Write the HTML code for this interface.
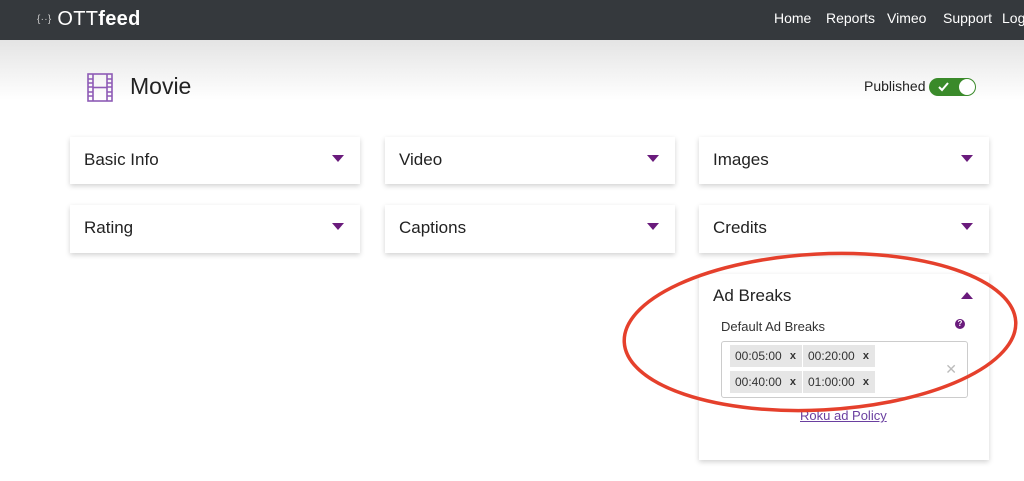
<!DOCTYPE html><html><head><style>
body{margin:0;width:1024px;height:481px;overflow:hidden;background:#fff;font-family:"Liberation Sans",sans-serif;position:relative}
.hdr{position:absolute;left:0;top:0;width:1024px;height:40px;background:#35393d;color:#fff}
.shade{position:absolute;top:40px;left:0;width:1024px;height:60px;background:linear-gradient(#e4e4e4,#fff)}
.logo{position:absolute;left:37px;top:8px;font-size:20px;letter-spacing:0.3px}
.nav{position:absolute;top:10px;font-size:14px}
.card{position:absolute;background:#fff;box-shadow:0 2px 5px rgba(0,0,0,.18);width:290px}
.card .t{position:absolute;left:14px;top:13px;font-size:17px;color:#222}
.tri{position:absolute;right:16px;top:18px;width:0;height:0;border-left:6px solid transparent;border-right:6px solid transparent;border-top:7px solid #6a1b7c}
.tag{position:absolute;background:#e6e6e6;height:22px;font-size:12px;color:#333;line-height:22px;padding-left:5px;width:67px}
.tag b{position:absolute;right:6px;font-size:11px}
</style></head><body>
<div class="hdr">
<div class="logo"><span style="font-size:10px;color:#ccc;vertical-align:3px">{··}</span> OTT<b>feed</b></div>
<div class="nav" style="left:774px">Home</div><div class="nav" style="left:826px">Reports</div><div class="nav" style="left:887px">Vimeo</div><div class="nav" style="left:943px">Support</div><div class="nav" style="left:1002px">Log</div>
</div>
<div class="shade"></div>
<svg style="position:absolute;left:87px;top:73px" width="26" height="29" viewBox="0 0 26 29"><g fill="none" stroke="#8e5bb6" stroke-width="1.6"><rect x="1" y="1" width="24" height="27"/><line x1="6" y1="1" x2="6" y2="28"/><line x1="20" y1="1" x2="20" y2="28"/><line x1="6" y1="14.5" x2="20" y2="14.5"/><path d="M1 6h5M1 10h5M1 14h5M1 19h5M1 23h5M20 6h5M20 10h5M20 14h5M20 19h5M20 23h5"/></g></svg>
<div style="position:absolute;left:130px;top:73px;font-size:23px;color:#222">Movie</div>
<div style="position:absolute;left:864px;top:78px;font-size:14px;color:#222">Published</div>
<div style="position:absolute;left:929px;top:78px;width:47px;height:18px;border-radius:9px;background:#3a8a2a"><svg style="position:absolute;left:9px;top:4px" width="11" height="10" viewBox="0 0 11 10"><path d="M1 5l3 3 6-7" fill="none" stroke="#fff" stroke-width="2"/></svg><div style="position:absolute;right:1px;top:1px;width:16px;height:16px;border-radius:50%;background:#fff"></div></div>
<div class="card" style="left:70px;top:137px;height:47px"><div class="t">Basic Info</div><div class="tri"></div></div>
<div class="card" style="left:385px;top:137px;height:47px"><div class="t">Video</div><div class="tri"></div></div>
<div class="card" style="left:699px;top:137px;height:47px"><div class="t">Images</div><div class="tri"></div></div>
<div class="card" style="left:70px;top:205px;height:48px"><div class="t">Rating</div><div class="tri"></div></div>
<div class="card" style="left:385px;top:205px;height:48px"><div class="t">Captions</div><div class="tri"></div></div>
<div class="card" style="left:699px;top:205px;height:48px"><div class="t">Credits</div><div class="tri"></div></div>
<div class="card" style="left:699px;top:274px;height:186px"><div class="t" style="top:12px">Ad Breaks</div><div class="tri" style="border-top:0;border-bottom:7px solid #6a1b7c;top:18px"></div>
<div style="position:absolute;left:22px;top:45px;font-size:13px;color:#333">Default Ad Breaks</div>
<div style="position:absolute;left:256px;top:45px;width:10px;height:10px;border-radius:50%;background:#6a1b7c;color:#fff;font-size:8px;text-align:center;line-height:10px;font-weight:bold">?</div>
<div style="position:absolute;left:22px;top:67px;width:245px;height:55px;border:1px solid #ccc;border-radius:3px">
<div class="tag" style="left:8px;top:3px">00:05:00<b>x</b></div><div class="tag" style="left:81px;top:3px">00:20:00<b>x</b></div>
<div class="tag" style="left:8px;top:29px">00:40:00<b>x</b></div><div class="tag" style="left:81px;top:29px">01:00:00<b>x</b></div>
<div style="position:absolute;right:10px;top:19px;color:#bbb;font-size:14px">✕</div></div>
<div style="position:absolute;left:101px;top:134px;font-size:13px;color:#6a3fa0;text-decoration:underline">Roku ad Policy</div>
</div>
<svg style="position:absolute;left:0;top:0" width="1024" height="481"><ellipse cx="820" cy="332" rx="196" ry="78" fill="none" stroke="#e5402c" stroke-width="3.5" transform="rotate(-3 820 332)"/></svg>
</body></html>
